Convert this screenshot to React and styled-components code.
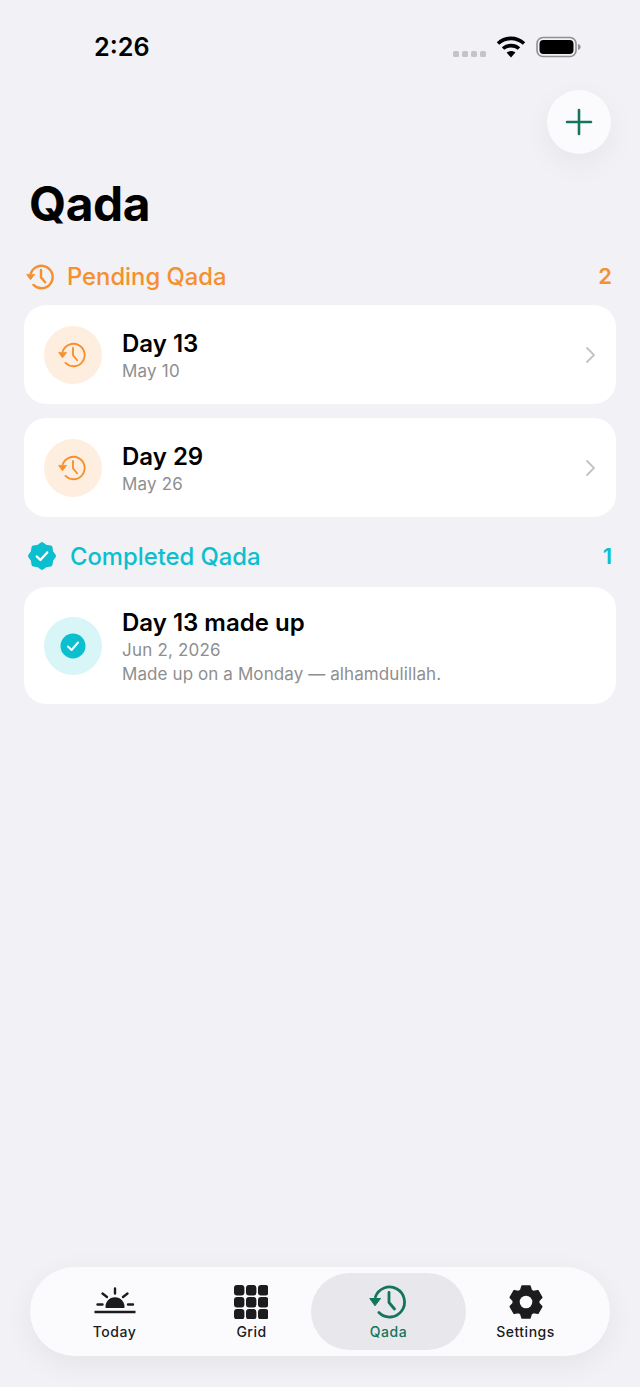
import React from "react";
import styled, { createGlobalStyle } from "styled-components";

const orange = "#f6902f";
const teal = "#0cbfce";
const green = "#12755c";
const ink = "#1c1c1e";

const GlobalStyle = createGlobalStyle`
  html, body { margin: 0; padding: 0; background: #f1f1f6; }
  body { font-family: Inter, "Noto Sans", sans-serif; -webkit-font-smoothing: antialiased; }
`;

const Page = styled.div`
  width: 640px;
  height: 1387px;
  display: flex;
  flex-direction: column;
  overflow: hidden;
  background: #f1f1f6;
`;

const StatusBar = styled.div`
  height: 90px;
  box-sizing: border-box;
  padding: 32px 58px 0 94px;
  display: flex;
  justify-content: space-between;
  align-items: flex-start;
`;

const Time = styled.span`
  font-size: 25.2px;
  line-height: 30px;
  font-weight: 600;
  color: #000;
`;

const StatusIcons = styled.div`
  display: flex;
  align-items: center;
  height: 30px;
`;

const Dots = styled.div`
  display: flex;
  gap: 3px;
  margin: 14px 10px 0 0;
`;

const Dot = styled.i`
  width: 6px;
  height: 6px;
  border-radius: 1.5px;
  background: #c4c4c8;
`;

const ActionRow = styled.div`
  display: flex;
  justify-content: flex-end;
  padding-right: 29px;
`;

const Fab = styled.button`
  width: 64px;
  height: 64px;
  padding: 0;
  border: 0;
  border-radius: 50%;
  background: #fbfbfd;
  box-shadow: 0 10px 30px rgba(0, 0, 0, 0.05);
  display: flex;
  align-items: center;
  justify-content: center;
`;

const Title = styled.h1`
  margin: 22px 0 0 29px;
  font-size: 47.8px;
  line-height: 56px;
  font-weight: 700;
  letter-spacing: -0.4px;
  color: #000;
`;

const Content = styled.div`
  padding: 0 24px;
  display: flex;
  flex-direction: column;
`;

const SectionHead = styled.div`
  display: flex;
  align-items: center;
  height: 40px;
  margin: ${(p) => p.$top}px 4px ${(p) => p.$bottom}px 3px;
  color: ${(p) => p.$color};
  font-size: 23.8px;
  font-weight: 500;
`;

const HeadIcon = styled.span`
  display: flex;
  margin-left: ${(p) => p.$shift || 0}px;
`;

const SectionTitle = styled.span`
  flex: 1;
  padding-bottom: 2px;
  margin-left: ${(p) => p.$gap}px;
`;

const Count = styled.span`
  padding-bottom: 2px;
  font-size: 22px;
  font-weight: 600;
`;

const Card = styled.div`
  background: #fff;
  border-radius: 22px;
  height: ${(p) => p.$height}px;
  margin-bottom: 14px;
  padding: 0 20px;
  display: flex;
  align-items: center;
`;

const IconCircle = styled.div`
  width: 58px;
  height: 58px;
  border-radius: 50%;
  flex: none;
  background: ${(p) => p.$bg};
  color: ${orange};
  display: flex;
  align-items: center;
  justify-content: center;
  margin-right: 20px;
`;

const CardText = styled.div`
  flex: 1;
  padding-top: 3px;
  display: flex;
  flex-direction: column;
`;

const CardTitle = styled.div`
  font-size: 24px;
  line-height: 30px;
  font-weight: 600;
  color: #000;
`;

const CardSub = styled.div`
  font-size: 17px;
  line-height: 24px;
  letter-spacing: ${(p) => (p.$tight ? 0.1 : 0.2)}px;
  color: #8e8e90;
`;

const TabBar = styled.nav`
  margin: auto 30px 31px;
  height: 89px;
  box-sizing: border-box;
  padding: 0 16px;
  border-radius: 45px;
  background: #fbfbfd;
  box-shadow: 0 8px 30px rgba(0, 0, 0, 0.06);
  display: flex;
  align-items: center;
`;

const Tab = styled.div`
  flex: 0 0 155px;
  margin: 0 -9px;
  height: 77px;
  border-radius: 39px;
  box-sizing: border-box;
  padding-top: 11px;
  background: ${(p) => (p.$active ? "#e8e8ec" : "transparent")};
  color: ${(p) => (p.$active ? green : ink)};
  display: flex;
  flex-direction: column;
  align-items: center;
`;

const TabIcon = styled.div`
  height: 36px;
  display: flex;
  align-items: center;
  justify-content: center;
`;

const TabLabel = styled.span`
  margin-top: 2px;
  font-size: 14px;
  line-height: 20px;
  font-weight: 500;
  letter-spacing: 0.5px;
`;

const HistoryIcon = ({ size, width = 2 }) => (
  <svg width={size} height={size} viewBox="0 0 40 40" fill="none" stroke="currentColor" strokeWidth={width}>
    <path d="M6.4 15A15 15 0 1 1 9.9 30.6" strokeLinecap="round" />
    <path d="M0.8 16.5H11.5L6 23.8Z" fill="currentColor" stroke="currentColor" strokeWidth="1" strokeLinejoin="round" />
    <path d="M20 10.5V20.5L25.5 27" strokeLinecap="round" strokeLinejoin="round" />
  </svg>
);

const ChevronIcon = () => (
  <svg width="12" height="18" viewBox="0 0 12 18" fill="none" stroke="#c3c3c7" strokeWidth="1.8" strokeLinecap="round" strokeLinejoin="round">
    <path d="M3 2L10 9L3 16" />
  </svg>
);

// scalloped seal, alternating radius
const sealPoints = (n, r1, r2, c) => {
  const pts = [];
  for (let i = 0; i < n * 2; i++) {
    const a = (Math.PI * i) / n - Math.PI / 2;
    const r = i % 2 ? r2 : r1;
    pts.push(`${(c + r * Math.cos(a)).toFixed(2)},${(c + r * Math.sin(a)).toFixed(2)}`);
  }
  return pts.join(" ");
};

const SealIcon = () => (
  <svg width="30" height="30" viewBox="0 0 30 30" style={{ marginTop: -2 }}>
    <polygon points={sealPoints(8, 12, 10, 15)} fill={teal} stroke={teal} strokeWidth="4" strokeLinejoin="round" />
    <path d="M9.8 15.5L13.4 19L20.2 11.5" fill="none" stroke="#fff" strokeWidth="2.4" strokeLinecap="round" strokeLinejoin="round" />
  </svg>
);

const CheckDisc = () => (
  <svg width="26" height="26" viewBox="0 0 26 26">
    <circle cx="13" cy="13" r="12.5" fill={teal} />
    <path d="M8 13.5L11.6 17L18 9.5" fill="none" stroke="#fff" strokeWidth="2" strokeLinecap="round" strokeLinejoin="round" />
  </svg>
);

const PlusIcon = () => (
  <svg width="28" height="28" viewBox="0 0 28 28" stroke={green} strokeWidth="2.6" strokeLinecap="round">
    <path d="M14 2V26M2 14H26" />
  </svg>
);

const WifiIcon = () => (
  <svg width="30" height="22" viewBox="0 0 30 22" fill="none" stroke="#000" strokeWidth="3.6">
    <path d="M2 7.5C9.5 0.7 20.5 0.7 28 7.5" />
    <path d="M7 12.5C11.5 8.6 18.5 8.6 23 12.5" />
    <path d="M15 21.5L10.6 16.6C13 14.6 17 14.6 19.4 16.6Z" fill="#000" stroke="none" />
  </svg>
);

const BatteryIcon = () => (
  <svg width="46" height="22" viewBox="0 0 46 22" style={{ marginLeft: 10 }}>
    <rect x="1" y="1.5" width="39" height="19" rx="6" fill="none" stroke="#8e8e93" strokeWidth="1.6" />
    <rect x="3.5" y="4" width="34" height="14" rx="4" fill="#000" />
    <path d="M42 8V14C43.6 13.6 44.6 12.4 44.6 11S43.6 8.4 42 8Z" fill="#8e8e93" />
  </svg>
);

const SunIcon = () => (
  <svg width="44" height="30" viewBox="0 0 44 30" fill={ink} stroke={ink} strokeLinecap="round">
    <path d="M12.6 21A9.5 9.5 0 1 1 31.4 21Z" stroke="none" />
    <path d="M1.5 25H42.5" strokeWidth="2.6" fill="none" strokeLinecap="butt" />
    <path d="M22 1.5V6.5M9.5 6.5L14 10M34.5 6.5L30 10M4.5 17.5H9.5M35 17.5H40" strokeWidth="2.4" fill="none" />
  </svg>
);

const GridIcon = () => (
  <svg width="34" height="34" viewBox="0 0 34 34" fill={ink} style={{ marginLeft: -1 }}>
    {[0, 12, 24].map((y) =>
      [0, 12, 24].map((x) => <rect key={`${x}-${y}`} x={x} y={y} width="10.4" height="10.4" rx="3" />)
    )}
  </svg>
);

const gearPoints = () => {
  const pts = [];
  const step = Math.PI / 3;
  for (let i = 0; i < 6; i++) {
    const a = i * step - Math.PI / 2;
    const spots = [
      [12.8, -0.42],
      [16.4, -0.24],
      [16.4, 0.24],
      [12.8, 0.42],
    ];
    spots.forEach(([r, d]) => {
      pts.push(`${(18 + r * Math.cos(a + d)).toFixed(2)},${(18 + r * Math.sin(a + d)).toFixed(2)}`);
    });
  }
  return pts.join(" ");
};

const GearIcon = () => (
  <svg width="36" height="36" viewBox="0 0 36 36">
    <polygon points={gearPoints()} fill={ink} stroke={ink} strokeWidth="1.6" strokeLinejoin="round" />
    <circle cx="18" cy="18" r="6.3" fill="#fbfbfd" />
  </svg>
);

const pending = [
  { title: "Day 13", date: "May 10" },
  { title: "Day 29", date: "May 26" },
];

const tabs = [
  { label: "Today", icon: <SunIcon /> },
  { label: "Grid", icon: <GridIcon /> },
  { label: "Qada", icon: <HistoryIcon size={40} width={2.8} />, active: true },
  { label: "Settings", icon: <GearIcon /> },
];

export default function App() {
  return (
    <Page>
      <GlobalStyle />
      <StatusBar>
        <Time>2:26</Time>
        <StatusIcons>
          <Dots>
            <Dot />
            <Dot />
            <Dot />
            <Dot />
          </Dots>
          <WifiIcon />
          <BatteryIcon />
        </StatusIcons>
      </StatusBar>
      <ActionRow>
        <Fab>
          <PlusIcon />
        </Fab>
      </ActionRow>
      <Title>Qada</Title>
      <Content>
        <SectionHead $top={25} $bottom={8} $color={orange}>
          <HeadIcon $shift={-1}>
            <HistoryIcon size={30} width={3.2} />
          </HeadIcon>
          <SectionTitle $gap={11}>Pending Qada</SectionTitle>
          <Count>2</Count>
        </SectionHead>
        {pending.map((d) => (
          <Card key={d.title} $height={99}>
            <IconCircle $bg="#feeee0">
              <HistoryIcon size={30} width={2.5} />
            </IconCircle>
            <CardText>
              <CardTitle>{d.title}</CardTitle>
              <CardSub>{d.date}</CardSub>
            </CardText>
            <ChevronIcon />
          </Card>
        ))}
        <SectionHead $top={6} $bottom={10} $color={teal}>
          <HeadIcon>
            <SealIcon />
          </HeadIcon>
          <SectionTitle $gap={13}>Completed Qada</SectionTitle>
          <Count>1</Count>
        </SectionHead>
        <Card $height={117}>
          <IconCircle $bg="#d8f5f7">
            <CheckDisc />
          </IconCircle>
          <CardText>
            <CardTitle>Day 13 made up</CardTitle>
            <CardSub>Jun 2, 2026</CardSub>
            <CardSub $tight>Made up on a Monday — alhamdulillah.</CardSub>
          </CardText>
        </Card>
      </Content>
      <TabBar>
        {tabs.map((t) => (
          <Tab key={t.label} $active={t.active}>
            <TabIcon>{t.icon}</TabIcon>
            <TabLabel>{t.label}</TabLabel>
          </Tab>
        ))}
      </TabBar>
    </Page>
  );
}
